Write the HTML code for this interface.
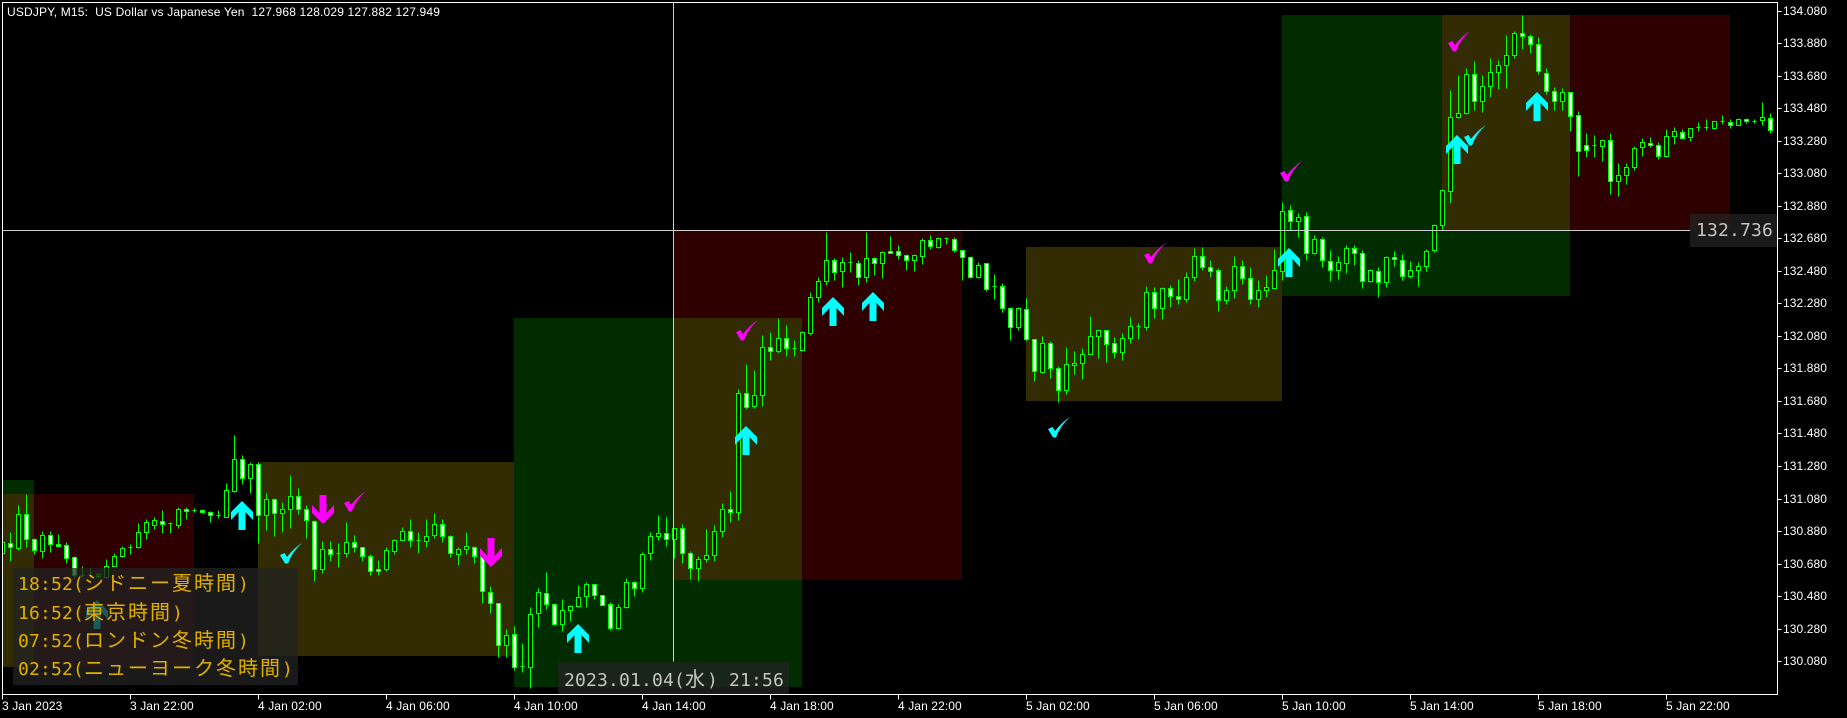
<!DOCTYPE html>
<html lang="ja"><head><meta charset="utf-8"><title>USDJPY M15</title>
<style>
html,body{margin:0;padding:0;background:#000;width:1847px;height:718px;overflow:hidden}
svg{position:absolute;left:0;top:0}
svg text{font-family:"Liberation Sans",sans-serif;font-size:12px;fill:#fff;letter-spacing:.1px;white-space:pre}
.box{position:absolute;background:rgba(35,35,35,.75)}
.m{position:absolute;font-family:"DejaVu Sans Mono","Liberation Mono",monospace;font-size:18px;white-space:pre;letter-spacing:.16px}
.m span{font-family:"Noto Sans CJK JP",sans-serif;font-size:20px;letter-spacing:2px}
.p{left:18px;height:28px;line-height:28px;color:#e0b000}
.g{color:#c4c4c4}
</style></head><body>
<svg width="1847" height="718" viewBox="0 0 1847 718" shape-rendering="crispEdges">
<g>
<rect x="2" y="480" width="32" height="14" fill="#002c00"/>
<rect x="2" y="494" width="32" height="173" fill="#332c02"/>
<rect x="34" y="494" width="160" height="173" fill="#2e0000"/>
<rect x="258" y="462" width="256" height="194" fill="#332c02"/>
<rect x="514" y="318" width="288" height="369" fill="#002c00"/>
<rect x="674" y="231" width="288" height="349" fill="#2e0000"/>
<rect x="674" y="318" width="128" height="262" fill="#332c02"/>
<rect x="1026" y="247" width="256" height="154" fill="#332c02"/>
<rect x="1282" y="15" width="288" height="281" fill="#002c00"/>
<rect x="1442" y="15" width="288" height="215" fill="#2e0000"/>
<rect x="1442" y="15" width="128" height="215" fill="#332c02"/>
</g>
<g transform="translate(.5 .5)" stroke="#0f0" stroke-width="1">
<path fill="none" d="M10 532V561M18 505V550M26 494V547M34 538V554M42 531V558M50 531V552M58 534V547M66 542V563M74 556V578M82 566V578M90 568V577M98 573V578M106 559V578M114 553V566M122 546V557M130 544V554M138 523V548M146 519V539M154 517V529M162 510V533M170 522V533M178 507V528M186 507V519M194 508V512M202 509V513M210 511V522M218 510V518M226 483V517M234 435V492M242 455V484M250 462V493M258 462V543M266 493V530M274 498V536M282 502V532M290 475V528M298 488V514M306 505V538M314 520V581M322 541V573M330 541V561M338 543V567M346 522V557M354 535V552M362 547V561M370 554V575M378 560V575M386 547V571M394 539V554M402 527V540M410 519V547M418 532V553M426 519V547M434 513V538M442 519V542M450 535V557M458 547V565M466 532V554M474 546V563M482 553V603M490 586V613M498 603V657M506 629V657M514 626V670M522 643V672M530 607V688M538 588V627M546 572V609M554 603V625M562 599V631M570 605V621M578 585V607M586 582V607M594 584V599M602 595V605M610 602V630M618 604V628M626 578V608M634 581V596M642 552V592M650 532V560M658 515V540M666 517V546M674 528V558M682 524V563M690 551V579M698 556V581M706 529V562M714 525V561M722 503V537M730 491V522M738 389V520M746 364V409M754 370V408M762 335V406M770 332V360M778 318V353M786 325V356M794 340V356M802 331V351M810 292V335M818 277V302M826 232V285M834 258V280M842 257V287M850 252V272M858 260V285M866 232V282M874 257V275M882 251V278M890 236V253M898 245V259M906 254V270M914 254V271M922 238V264M930 235V249M938 237V248M946 237V244M954 237V252M962 250V280M970 256V278M978 262V278M986 263V291M994 274V299M1002 283V312M1010 307V340M1018 307V330M1026 298V341M1034 339V381M1042 336V373M1050 341V378M1058 366V402M1066 347V394M1074 351V374M1082 348V379M1090 316V355M1098 330V358M1106 330V362M1114 337V358M1122 333V360M1130 317V343M1138 323V339M1146 286V330M1154 287V318M1162 287V319M1170 285V307M1178 279V304M1186 272V302M1194 248V281M1202 247V270M1210 260V277M1218 268V311M1226 286V304M1234 256V298M1242 260V284M1250 267V304M1258 280V307M1266 275V297M1274 249V288M1282 202V280M1290 205V230M1298 213V237M1306 212V260M1314 235V254M1322 237V267M1330 250V281M1338 256V279M1346 245V273M1354 245V265M1362 250V288M1370 269V282M1378 267V297M1386 256V287M1394 251V266M1402 254V280M1410 261V278M1418 262V286M1426 249V271M1434 224V252M1442 189V230M1450 90V203M1458 75V118M1466 68V114M1474 61V110M1482 75V112M1490 58V97M1498 60V89M1506 35V88M1514 31V58M1522 15V49M1530 34V53M1538 37V74M1546 68V94M1554 87V110M1562 88V110M1570 92V131M1578 111V176M1586 133V157M1594 135V157M1602 139V161M1610 133V194M1618 163V196M1626 163V184M1634 146V170M1642 138V156M1650 137V147M1658 142V159M1666 129V157M1674 127V144M1682 129V139M1690 128V141M1698 122V131M1706 119V130M1714 121V129M1722 115V124M1730 119V128M1738 118V125M1746 118V123M1754 119V123M1762 102V125M1770 113V133"/>
<path fill="#000" d="M2 542h2v11h-2M16 514h4v34h-4zM40 535h4v16h-4zM96 574h4v2h-4zM104 566h4v11h-4zM112 556h4v10h-4zM120 548h4v8h-4zM136 532h4v15h-4zM144 522h4v10h-4zM152 520h4v5h-4zM176 509h4v16h-4zM224 490h4v27h-4zM232 459h4v32h-4zM248 464h4v14h-4zM264 499h4v16h-4zM280 509h4v4h-4zM288 496h4v13h-4zM320 549h4v20h-4zM344 542h4v11h-4zM384 550h4v19h-4zM392 540h4v11h-4zM400 531h4v9h-4zM424 536h4v5h-4zM432 524h4v11h-4zM456 549h4v5h-4zM464 546h4v3h-4zM504 635h4v10h-4zM528 614h4v53h-4zM536 592h4v21h-4zM560 610h4v14h-4zM568 606h4v4h-4zM576 597h4v9h-4zM584 584h4v12h-4zM616 607h4v21h-4zM624 582h4v25h-4zM640 554h4v34h-4zM648 536h4v17h-4zM656 533h4v3h-4zM672 528h4v11h-4zM696 559h4v9h-4zM704 555h4v4h-4zM712 531h4v24h-4zM720 509h4v22h-4zM736 393h4v119h-4zM752 395h4v11h-4zM760 347h4v48h-4zM776 338h4v13h-4zM800 332h4v18h-4zM808 297h4v36h-4zM816 281h4v16h-4zM824 260h4v21h-4zM840 262h4v9h-4zM864 258h4v19h-4zM880 252h4v11h-4zM912 255h4v5h-4zM920 240h4v16h-4zM936 238h4v9h-4zM976 265h4v12h-4zM1016 308h4v19h-4zM1040 343h4v29h-4zM1064 364h4v26h-4zM1072 363h4v2h-4zM1080 354h4v9h-4zM1088 336h4v18h-4zM1096 330h4v6h-4zM1120 338h4v14h-4zM1128 326h4v12h-4zM1144 292h4v35h-4zM1160 288h4v20h-4zM1184 277h4v22h-4zM1192 256h4v21h-4zM1224 290h4v10h-4zM1232 266h4v24h-4zM1256 290h4v9h-4zM1264 287h4v3h-4zM1272 270h4v18h-4zM1280 211h4v60h-4zM1296 217h4v4h-4zM1312 239h4v14h-4zM1336 262h4v8h-4zM1344 248h4v15h-4zM1368 270h4v11h-4zM1384 257h4v25h-4zM1408 270h4v6h-4zM1416 266h4v4h-4zM1424 251h4v15h-4zM1432 225h4v25h-4zM1440 190h4v35h-4zM1448 117h4v74h-4zM1456 113h4v4h-4zM1464 74h4v39h-4zM1480 86h4v15h-4zM1488 72h4v14h-4zM1496 65h4v7h-4zM1504 55h4v10h-4zM1512 33h4v22h-4zM1560 92h4v9h-4zM1600 140h4v6h-4zM1616 175h4v6h-4zM1624 167h4v8h-4zM1632 148h4v19h-4zM1640 142h4v5h-4zM1664 136h4v20h-4zM1672 131h4v5h-4zM1688 128h4v9h-4zM1712 121h4v7h-4zM1736 119h4v6h-4zM1760 117h4v3h-4z"/>
<path fill="#fff" d="M8 543h4v4h-4zM24 514h4v25h-4zM32 539h4v11h-4zM48 535h4v9h-4zM56 544h4v2h-4zM64 545h4v13h-4zM72 557h4v18h-4zM160 521h4v3h-4zM184 509h4v2h-4zM200 510h4v2h-4zM208 512h4v3h-4zM240 459h4v19h-4zM256 464h4v51h-4zM272 499h4v14h-4zM296 496h4v13h-4zM304 509h4v11h-4zM312 521h4v48h-4zM328 549h4v5h-4zM352 542h4v5h-4zM360 547h4v9h-4zM368 556h4v15h-4zM376 569h4v2h-4zM408 531h4v9h-4zM440 524h4v12h-4zM448 536h4v17h-4zM472 547h4v9h-4zM480 556h4v35h-4zM488 592h4v11h-4zM496 603h4v42h-4zM512 634h4v33h-4zM544 593h4v11h-4zM552 604h4v20h-4zM592 584h4v11h-4zM600 595h4v10h-4zM608 604h4v24h-4zM632 582h4v6h-4zM664 533h4v6h-4zM680 528h4v25h-4zM688 553h4v15h-4zM728 509h4v3h-4zM744 393h4v14h-4zM768 347h4v4h-4zM784 338h4v10h-4zM832 260h4v12h-4zM856 263h4v14h-4zM872 258h4v5h-4zM888 251h4v2h-4zM896 251h4v4h-4zM904 255h4v5h-4zM928 240h4v6h-4zM952 239h4v11h-4zM960 250h4v7h-4zM968 257h4v20h-4zM984 263h4v26h-4zM1000 286h4v22h-4zM1008 308h4v19h-4zM1024 309h4v30h-4zM1032 339h4v32h-4zM1048 343h4v25h-4zM1056 368h4v22h-4zM1104 330h4v14h-4zM1112 343h4v9h-4zM1152 292h4v16h-4zM1168 288h4v8h-4zM1176 296h4v3h-4zM1200 256h4v11h-4zM1208 267h4v4h-4zM1216 270h4v30h-4zM1240 266h4v12h-4zM1248 278h4v21h-4zM1288 210h4v11h-4zM1304 216h4v37h-4zM1320 239h4v21h-4zM1328 261h4v9h-4zM1352 248h4v5h-4zM1360 253h4v28h-4zM1376 271h4v11h-4zM1392 257h4v2h-4zM1400 260h4v16h-4zM1472 74h4v27h-4zM1520 33h4v3h-4zM1528 36h4v8h-4zM1536 44h4v27h-4zM1544 73h4v18h-4zM1552 91h4v10h-4zM1568 92h4v24h-4zM1576 115h4v36h-4zM1584 145h4v5h-4zM1608 140h4v41h-4zM1648 143h4v2h-4zM1656 145h4v11h-4zM1680 132h4v6h-4zM1728 122h4v3h-4zM1744 119h4v2h-4zM1768 118h4v12h-4z"/>
<path fill="none" d="M80 575h4M88 575h4M128 547h4M168 523h4M192 510h4M216 515h4M336 553h4M416 540h4M520 666h4M792 348h4M848 262h4M944 238h4M992 286h4M1136 326h4M1592 145h4M1696 127h4M1704 127h4M1720 121h4M1752 121h4"/>
</g>
<g shape-rendering="auto">
<g fill="#0ff">
<path transform="translate(86 600)" d="M11 0L0 11V19L7.500 11V29H14.500V11L22 19V11Z"/>
<path transform="translate(231 501)" d="M11 0L0 11V19L7.500 11V29H14.500V11L22 19V11Z"/>
<path transform="translate(567 624)" d="M11 0L0 11V19L7.500 11V29H14.500V11L22 19V11Z"/>
<path transform="translate(735 426)" d="M11 0L0 11V19L7.500 11V29H14.500V11L22 19V11Z"/>
<path transform="translate(822 297)" d="M11 0L0 11V19L7.500 11V29H14.500V11L22 19V11Z"/>
<path transform="translate(862 292)" d="M11 0L0 11V19L7.500 11V29H14.500V11L22 19V11Z"/>
<path transform="translate(1278 248)" d="M11 0L0 11V19L7.500 11V29H14.500V11L22 19V11Z"/>
<path transform="translate(1446 135)" d="M11 0L0 11V19L7.500 11V29H14.500V11L22 19V11Z"/>
<path transform="translate(1526 92)" d="M11 0L0 11V19L7.500 11V29H14.500V11L22 19V11Z"/>
<path transform="translate(280 543)" d="M0 12L4.500 10L7 14Q14 5 22 0Q12 9 8 20.500H5Z"/>
<path transform="translate(1048 417)" d="M0 12L4.500 10L7 14Q14 5 22 0Q12 9 8 20.500H5Z"/>
<path transform="translate(1464 125)" d="M0 12L4.500 10L7 14Q14 5 22 0Q12 9 8 20.500H5Z"/>
</g>
<g fill="#f0f">
<path transform="translate(312 495)" d="M7.500 0H14.500V18L22 10V18L11 29L0 18V10L7.500 18Z"/>
<path transform="translate(480 538)" d="M7.500 0H14.500V18L22 10V18L11 29L0 18V10L7.500 18Z"/>
<path transform="translate(344 491)" d="M0 12L4.500 10L7 14Q14 5 22 0Q12 9 8 20.500H5Z"/>
<path transform="translate(736 320)" d="M0 12L4.500 10L7 14Q14 5 22 0Q12 9 8 20.500H5Z"/>
<path transform="translate(1144 243)" d="M0 12L4.500 10L7 14Q14 5 22 0Q12 9 8 20.500H5Z"/>
<path transform="translate(1280 161)" d="M0 12L4.500 10L7 14Q14 5 22 0Q12 9 8 20.500H5Z"/>
<path transform="translate(1448 31)" d="M0 12L4.500 10L7 14Q14 5 22 0Q12 9 8 20.500H5Z"/>
</g>
</g>
<g transform="translate(.5 .5)" fill="none" stroke="#cfcfcf">
<path d="M2 230H1690M673 2V661"/>
</g>
<g transform="translate(.5 .5)" fill="none" stroke="#fff">
<path d="M2 2H1777V694H2ZM1777 11h4M1777 43h4M1777 76h4M1777 108h4M1777 141h4M1777 173h4M1777 206h4M1777 238h4M1777 271h4M1777 303h4M1777 336h4M1777 368h4M1777 401h4M1777 433h4M1777 466h4M1777 499h4M1777 531h4M1777 564h4M1777 596h4M1777 629h4M1777 661h4M2 694v5M130 694v5M258 694v5M386 694v5M514 694v5M642 694v5M770 694v5M898 694v5M1026 694v5M1154 694v5M1282 694v5M1410 694v5M1538 694v5M1666 694v5"/>
</g>
<g shape-rendering="auto">
<text x="7" y="16" textLength="433" lengthAdjust="spacing" xml:space="preserve">USDJPY, M15:  US Dollar vs Japanese Yen  127.968 128.029 127.882 127.949</text>
<text x="1783" y="15">134.080</text><text x="1783" y="47">133.880</text><text x="1783" y="80">133.680</text><text x="1783" y="112">133.480</text><text x="1783" y="145">133.280</text><text x="1783" y="177">133.080</text><text x="1783" y="210">132.880</text><text x="1783" y="242">132.680</text><text x="1783" y="275">132.480</text><text x="1783" y="307">132.280</text><text x="1783" y="340">132.080</text><text x="1783" y="372">131.880</text><text x="1783" y="405">131.680</text><text x="1783" y="437">131.480</text><text x="1783" y="470">131.280</text><text x="1783" y="503">131.080</text><text x="1783" y="535">130.880</text><text x="1783" y="568">130.680</text><text x="1783" y="600">130.480</text><text x="1783" y="633">130.280</text><text x="1783" y="665">130.080</text>
<text x="2" y="710">3 Jan 2023</text><text x="130" y="710">3 Jan 22:00</text><text x="258" y="710">4 Jan 02:00</text><text x="386" y="710">4 Jan 06:00</text><text x="514" y="710">4 Jan 10:00</text><text x="642" y="710">4 Jan 14:00</text><text x="770" y="710">4 Jan 18:00</text><text x="898" y="710">4 Jan 22:00</text><text x="1026" y="710">5 Jan 02:00</text><text x="1154" y="710">5 Jan 06:00</text><text x="1282" y="710">5 Jan 10:00</text><text x="1410" y="710">5 Jan 14:00</text><text x="1538" y="710">5 Jan 18:00</text><text x="1666" y="710">5 Jan 22:00</text>
</g>
</svg>
<div class="box" style="left:13px;top:568px;width:285px;height:117px"></div>
<div class="m p" style="top:568px">18:52(<span>シドニー夏時間</span>)</div>
<div class="m p" style="top:597px">16:52(<span>東京時間</span>)</div>
<div class="m p" style="top:625px">07:52(<span>ロンドン冬時間</span>)</div>
<div class="m p" style="top:653px">02:52(<span>ニューヨーク冬時間</span>)</div>
<div class="box" style="left:558px;top:662px;width:231px;height:32px"></div>
<div class="m g" style="left:564px;top:662px;height:32px;line-height:32px">2023.01.04(<span>水</span>) 21:56</div>
<div class="box" style="left:1690px;top:214px;width:87px;height:33px"></div>
<div class="m g" style="left:1696px;top:214px;height:33px;line-height:33px">132.736</div>
</body></html>
